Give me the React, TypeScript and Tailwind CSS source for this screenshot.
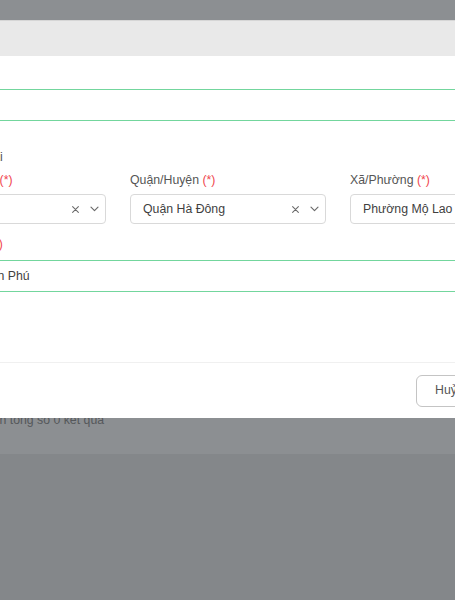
import React from "react";

const font = { fontFamily: '"Liberation Sans", Arial, sans-serif' };

function XIcon() {
  return (
    <svg width="9" height="9" viewBox="0 0 10 10" className="shrink-0">
      <path d="M1.8 1.8 L8.2 8.2 M8.2 1.8 L1.8 8.2" stroke="#6b6b6b" strokeWidth="1.2" strokeLinecap="round" />
    </svg>
  );
}

function Chevron() {
  return (
    <svg width="9" height="6" viewBox="0 0 9 6" className="shrink-0">
      <path d="M1 1.2 L4.5 4.7 L8 1.2" stroke="#6b6b6b" strokeWidth="1.2" fill="none" strokeLinecap="round" strokeLinejoin="round" />
    </svg>
  );
}

function Select({ value }: { value: string }) {
  return (
    <div className="h-[30px] rounded-[4px] border border-[#d9d9d9] bg-white flex items-center pl-[12px] pr-[2px]">
      <span className="flex-1 text-[12.3px] text-[#3f3f3f] truncate">{value}</span>
      <span className="w-[20px] flex justify-center">
        <XIcon />
      </span>
      <span className="w-[18px] flex justify-center">
        <Chevron />
      </span>
    </div>
  );
}

function Label({ text }: { text: string }) {
  return (
    <div className="h-[20px] leading-[20px] text-[12.3px] text-[#555] whitespace-nowrap">
      {text} <span className="text-[#f0454d]">(*)</span>
    </div>
  );
}

export default function App() {
  return (
    <div className="relative w-[455px] h-[600px] overflow-hidden" style={font}>
      <div className="h-[454px] bg-[#8c8f92] flex flex-col justify-end">
        <div className="h-[42px] ml-[-60px] text-[12.3px] text-[#55585b] leading-[16px] whitespace-nowrap">
          Hiển thị trên tổng số 0 kết quả
        </div>
      </div>
      <div className="h-[146px] bg-[#84878a]" />

      <div className="absolute top-[20px] left-[-114px] w-[684px] bg-white">
        <div className="h-[36px] bg-[#e9e9e9] border-t border-[#d6d6d6]" />
        <div className="px-[24px] pt-[33px] h-[306px]">
          <div className="h-[32px] border border-[#73d69d] rounded-[4px]" />
          <div className="mt-[26px] pl-[12px] h-[20px] leading-[20px] text-[12.3px] text-[#555] whitespace-nowrap">
            Địa chỉ hiện tại
          </div>
          <div className="mt-[3px] grid grid-cols-[196px_196px_196px] gap-x-[24px]">
            <div>
              <Label text="Tỉnh/Thành phố" />
              <div className="mt-[4px]">
                <Select value="Hà Nội" />
              </div>
            </div>
            <div>
              <Label text="Quận/Huyện" />
              <div className="mt-[4px]">
                <Select value="Quận Hà Đông" />
              </div>
            </div>
            <div>
              <Label text="Xã/Phường" />
              <div className="mt-[4px]">
                <Select value="Phường Mộ Lao" />
              </div>
            </div>
          </div>
          <div className="mt-[10px]">
            <Label text="Địa chỉ chi tiết" />
          </div>
          <div className="mt-[6px] h-[32px] border border-[#73d69d] rounded-[4px] flex items-center pl-[15px] pr-[12px] text-[12.3px] text-[#3f3f3f] whitespace-nowrap">
            Số 1 KĐT Văn Phú
          </div>
        </div>
        <div className="border-t border-[#f0f0f0] h-[56px] flex items-center px-[24px]">
          <div className="ml-[506px] h-[32px] px-[18px] rounded-[6px] border border-[#c4c4c4] flex items-center text-[12.3px] text-[#555]">
            Huỷ
          </div>
        </div>
      </div>
    </div>
  );
}
